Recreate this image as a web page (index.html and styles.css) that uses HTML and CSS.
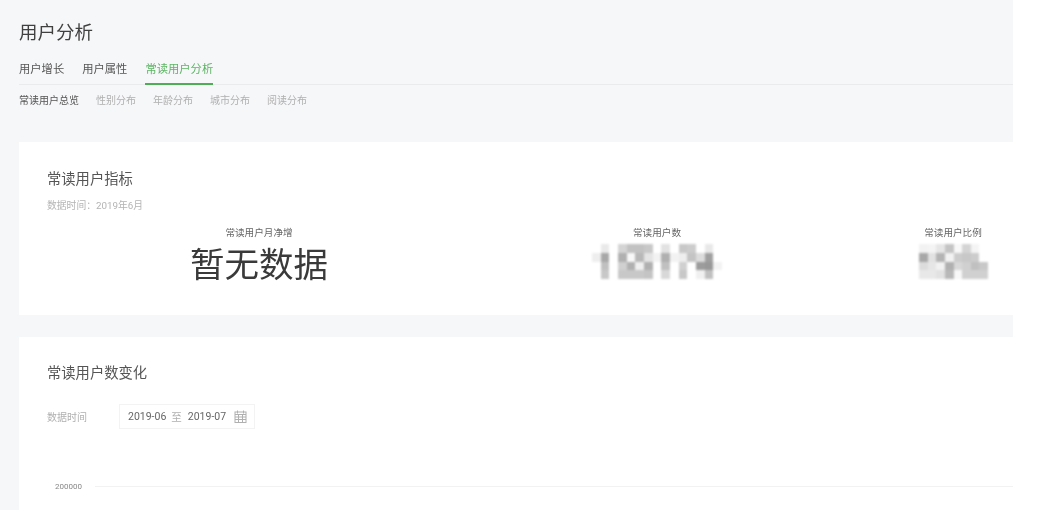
FILE: index.html
```html
<!DOCTYPE html>
<html lang="zh-CN">
<head>
    <meta charset="UTF-8">
    <meta name="viewport" content="width=device-width, initial-scale=1.0">
    <title>用户分析</title>
    <link rel="stylesheet" href="styles.css">
</head>
<body>
    <div class="page">
        <h1 class="page-title">用户分析</h1>

        <div class="tabs">
            <a class="tab">用户增长</a>
            <a class="tab">用户属性</a>
            <a class="tab tab-active">常读用户分析</a>
        </div>

        <div class="subtabs">
            <a class="subtab subtab-active">常读用户总览</a>
            <a class="subtab">性别分布</a>
            <a class="subtab">年龄分布</a>
            <a class="subtab">城市分布</a>
            <a class="subtab">阅读分布</a>
        </div>

        <section class="card card-stats">
            <h2 class="card-title">常读用户指标</h2>
            <p class="card-meta">数据时间：2019年6月</p>
            <div class="stats">
                <div class="stat">
                    <div class="stat-label">常读用户月净增</div>
                    <div class="stat-value">暂无数据</div>
                </div>
                <div class="stat">
                    <div class="stat-label">常读用户数</div>
                    <div class="stat-value">
                        <!-- 打码的数字 -->
                        <svg class="mosaic mosaic-count" viewBox="0 0 15 4">
                            <rect x="1" y="0" width="1" height="1" fill="#e9e9e9"/>
                            <rect x="3" y="0" width="1" height="1" fill="#d4d4d4"/>
                            <rect x="4" y="0" width="1" height="1" fill="#c2c2c2"/>
                            <rect x="5" y="0" width="1" height="1" fill="#c2c2c2"/>
                            <rect x="6" y="0" width="1" height="1" fill="#c8c8c8"/>
                            <rect x="8" y="0" width="1" height="1" fill="#e2e2e2"/>
                            <rect x="10" y="0" width="1" height="1" fill="#c8c8c8"/>
                            <rect x="11" y="0" width="1" height="1" fill="#cccccc"/>
                            <rect x="13" y="0" width="1" height="1" fill="#e8e8e8"/>
                            <rect x="0" y="1" width="1" height="1" fill="#eeeeee"/>
                            <rect x="1" y="1" width="1" height="1" fill="#a8a8a8"/>
                            <rect x="3" y="1" width="1" height="1" fill="#b0b0b0"/>
                            <rect x="4" y="1" width="1" height="1" fill="#f8f8f8"/>
                            <rect x="5" y="1" width="1" height="1" fill="#b8b8b8"/>
                            <rect x="6" y="1" width="1" height="1" fill="#e4e4e4"/>
                            <rect x="7" y="1" width="1" height="1" fill="#f2f2f2"/>
                            <rect x="8" y="1" width="1" height="1" fill="#b0b0b0"/>
                            <rect x="9" y="1" width="1" height="1" fill="#f2f2f2"/>
                            <rect x="10" y="1" width="1" height="1" fill="#eeeeee"/>
                            <rect x="11" y="1" width="1" height="1" fill="#c4c4c4"/>
                            <rect x="12" y="1" width="1" height="1" fill="#dcdcdc"/>
                            <rect x="13" y="1" width="1" height="1" fill="#a0a0a0"/>
                            <rect x="1" y="2" width="1" height="1" fill="#c0c0c0"/>
                            <rect x="3" y="2" width="1" height="1" fill="#d0d0d0"/>
                            <rect x="4" y="2" width="1" height="1" fill="#b0b0b0"/>
                            <rect x="5" y="2" width="1" height="1" fill="#f0f0f0"/>
                            <rect x="6" y="2" width="1" height="1" fill="#b0b0b0"/>
                            <rect x="8" y="2" width="1" height="1" fill="#c0c0c0"/>
                            <rect x="10" y="2" width="1" height="1" fill="#d0d0d0"/>
                            <rect x="12" y="2" width="1" height="1" fill="#9c9c9c"/>
                            <rect x="13" y="2" width="1" height="1" fill="#989898"/>
                            <rect x="14" y="2" width="1" height="1" fill="#f2f2f2"/>
                            <rect x="1" y="3" width="1" height="1" fill="#c8c8c8"/>
                            <rect x="3" y="3" width="1" height="1" fill="#c8c8c8"/>
                            <rect x="4" y="3" width="1" height="1" fill="#c8c8c8"/>
                            <rect x="5" y="3" width="1" height="1" fill="#c8c8c8"/>
                            <rect x="6" y="3" width="1" height="1" fill="#c4c4c4"/>
                            <rect x="8" y="3" width="1" height="1" fill="#d8d8d8"/>
                            <rect x="10" y="3" width="1" height="1" fill="#c8c8c8"/>
                            <rect x="12" y="3" width="1" height="1" fill="#f0f0f0"/>
                            <rect x="13" y="3" width="1" height="1" fill="#c0c0c0"/>
                        </svg>
                    </div>
                </div>
                <div class="stat">
                    <div class="stat-label">常读用户比例</div>
                    <div class="stat-value">
                        <svg class="mosaic mosaic-ratio" viewBox="0 0 8 4">
                            <rect x="0" y="0" width="1" height="1" fill="#f2f2f2"/>
                            <rect x="1" y="0" width="1" height="1" fill="#f4f4f4"/>
                            <rect x="2" y="0" width="1" height="1" fill="#e6e6e6"/>
                            <rect x="3" y="0" width="1" height="1" fill="#c4c4c4"/>
                            <rect x="4" y="0" width="1" height="1" fill="#f8f8f8"/>
                            <rect x="5" y="0" width="1" height="1" fill="#d4d4d4"/>
                            <rect x="6" y="0" width="1" height="1" fill="#f4f4f4"/>
                            <rect x="0" y="1" width="1" height="1" fill="#a8a8a8"/>
                            <rect x="1" y="1" width="1" height="1" fill="#e2e2e2"/>
                            <rect x="2" y="1" width="1" height="1" fill="#b4b4b4"/>
                            <rect x="3" y="1" width="1" height="1" fill="#f2f2f2"/>
                            <rect x="4" y="1" width="1" height="1" fill="#cccccc"/>
                            <rect x="5" y="1" width="1" height="1" fill="#c8c8c8"/>
                            <rect x="6" y="1" width="1" height="1" fill="#cccccc"/>
                            <rect x="0" y="2" width="1" height="1" fill="#dcdcdc"/>
                            <rect x="1" y="2" width="1" height="1" fill="#e6e6e6"/>
                            <rect x="2" y="2" width="1" height="1" fill="#f2f2f2"/>
                            <rect x="3" y="2" width="1" height="1" fill="#b0b0b0"/>
                            <rect x="4" y="2" width="1" height="1" fill="#d8d8d8"/>
                            <rect x="5" y="2" width="1" height="1" fill="#d0d0d0"/>
                            <rect x="6" y="2" width="1" height="1" fill="#c0c0c0"/>
                            <rect x="7" y="2" width="1" height="1" fill="#c8c8c8"/>
                            <rect x="0" y="3" width="1" height="1" fill="#e8e8e8"/>
                            <rect x="1" y="3" width="1" height="1" fill="#e8e8e8"/>
                            <rect x="2" y="3" width="1" height="1" fill="#e2e2e2"/>
                            <rect x="3" y="3" width="1" height="1" fill="#b8b8b8"/>
                            <rect x="4" y="3" width="1" height="1" fill="#f8f8f8"/>
                            <rect x="5" y="3" width="1" height="1" fill="#d0d0d0"/>
                            <rect x="6" y="3" width="1" height="1" fill="#d0d0d0"/>
                            <rect x="7" y="3" width="1" height="1" fill="#d0d0d0"/>
                        </svg>
                    </div>
                </div>
            </div>
        </section>

        <section class="card card-trend">
            <h2 class="card-title">常读用户数变化</h2>
            <div class="filter">
                <span class="filter-label">数据时间</span>
                <div class="date-range">
                    <span>2019-06</span>
                    <span class="date-sep">至</span>
                    <span>2019-07</span>
                    <svg class="date-icon" viewBox="0 0 13 13" fill="none" stroke="#b0b0b0" stroke-width="1">
                        <rect x="1" y="2" width="11" height="10.5"/>
                        <path d="M1 4.5h11M3.5 0.5v3M9.5 0.5v3M1 7h11M1 9.5h11M4.5 4.5v8M8.5 4.5v8"/>
                    </svg>
                </div>
            </div>
            <div class="chart-row">
                <span class="chart-tick">200000</span>
                <div class="chart-line"></div>
            </div>
        </section>
    </div>
</body>
</html>
```

FILE: styles.css
```css
* {
    margin: 0;
    padding: 0;
    box-sizing: border-box;
}

body {
    font-family: Roboto, 'Noto Sans CJK SC', sans-serif;
    background: white;
    color: #333;
}

.page {
    display: flex;
    flex-direction: column;
    width: 1013px;
    height: 100vh;
    padding: 21px 0 0 19px;
    background: #f6f7f9;
    overflow: hidden;
    filter: blur(0.6px);
}

.page-title {
    font-size: 18.5px;
    font-weight: 400;
    line-height: 24px;
    color: #404040;
}

.tabs {
    display: flex;
    gap: 18px;
    height: 26px;
    margin-top: 14px;
    border-bottom: 1px solid #e9ebed;
}

.tab {
    font-size: 11.3px;
    line-height: 22px;
    height: 26px;
    color: #555;
}

.tab-active {
    color: #5cb463;
    border-bottom: 2px solid #4dae55;
}

.subtabs {
    display: flex;
    gap: 17px;
    margin-top: 8px;
}

.subtab {
    font-size: 10px;
    line-height: 16px;
    color: #b0b0b0;
}

.subtab-active {
    color: #555;
}

.card {
    background: white;
    padding-left: 28px;
}

.card-stats {
    height: 173px;
    margin-top: 33px;
    padding-top: 27px;
}

.card-trend {
    flex: 1;
    margin-top: 22px;
    padding-top: 26px;
}

.card-title {
    font-size: 14.3px;
    font-weight: 400;
    line-height: 20px;
    color: #555;
}

.card-meta {
    margin-top: 10px;
    font-size: 9.8px;
    line-height: 14px;
    color: #b4b4b4;
}

.stats {
    display: grid;
    grid-template-columns: 424px 372px 220px;
    margin-top: 13px;
}

.stat {
    text-align: center;
}

.stat-label {
    font-size: 9.6px;
    line-height: 14px;
    color: #666;
}

.stat-value {
    display: flex;
    align-items: center;
    justify-content: center;
    height: 44px;
    font-size: 34.5px;
    color: #3a3a3a;
}

.mosaic {
    display: block;
    height: 35px;
    margin-top: -1px;
    shape-rendering: crispEdges;
    filter: blur(1px);
}

.mosaic-count {
    width: 130px;
}

.mosaic-ratio {
    width: 69px;
}

.filter {
    display: flex;
    align-items: center;
    margin-top: 21px;
}

.filter-label {
    width: 72px;
    font-size: 10px;
    color: #b0b0b0;
}

.date-range {
    display: flex;
    align-items: center;
    width: 136px;
    height: 25px;
    padding-left: 8px;
    border: 1px solid #f3f3f3;
    font-size: 10.5px;
    color: #666;
}

.date-sep {
    margin: 0 6px 0 5px;
    color: #b0b0b0;
}

.date-icon {
    width: 13px;
    height: 13px;
    margin-left: 8px;
}

.chart-row {
    display: flex;
    align-items: center;
    height: 14px;
    margin-top: 50px;
}

.chart-tick {
    width: 48px;
    padding-left: 8px;
    font-size: 8px;
    color: #888;
}

.chart-line {
    flex: 1;
    height: 1px;
    background: #f2f2f2;
}
```
